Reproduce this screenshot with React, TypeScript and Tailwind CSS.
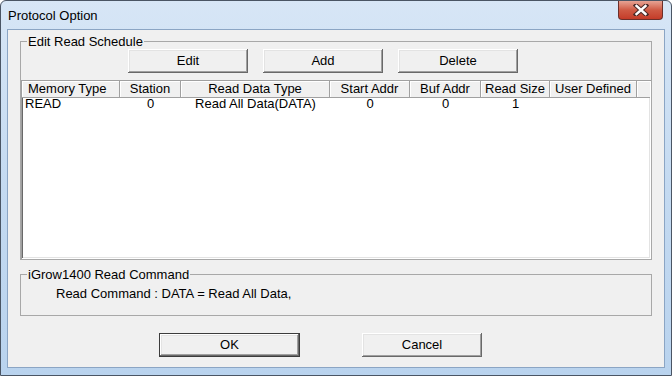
import React from 'react'

const COLS = [
  { label: 'Memory Type', align: 'text-left pl-[6px]' },
  { label: 'Station', align: 'text-center' },
  { label: 'Read Data Type', align: 'text-center' },
  { label: 'Start Addr', align: 'text-center' },
  { label: 'Buf Addr', align: 'text-center' },
  { label: 'Read Size', align: 'text-center' },
  { label: 'User Defined', align: 'text-center' },
]

const ROWS = [
  ['READ', '0', 'Read All Data(DATA)', '0', '0', '1', ''],
]

function WinButton({ label, isDefault }: { label: string; isDefault?: boolean }) {
  return (
    <button
      className={
        'h-[24px] bg-[#f0f0f0] text-[13px] text-black ' +
        (isDefault
          ? 'w-[141px] border border-[#3c3c3c] shadow-[inset_-1px_-1px_#696969,inset_1px_1px_#ffffff,inset_-2px_-2px_#a0a0a0,inset_2px_2px_#e3e3e3]'
          : 'w-[120px] shadow-[inset_-1px_-1px_#696969,inset_1px_1px_#ffffff,inset_-2px_-2px_#a0a0a0,inset_2px_2px_#e3e3e3]')
      }
    >
      {label}
    </button>
  )
}

export default function App() {
  return (
    <div
      className="w-[672px] h-[376px] bg-white"
      style={{ fontFamily: '"Liberation Sans", Arial, sans-serif' }}
    >
      <div className="w-[672px] h-[376px] rounded-t-[6px] border border-[#4a5564] bg-gradient-to-b from-[#d7e6f6] via-[#c4daf1] to-[#b9d3ee] flex flex-col">
        {/* title bar */}
        <div className="h-[28px] flex items-start justify-between">
          <span className="pl-[7px] pt-[5px] text-[13px] text-black">Protocol Option</span>
          <div className="mr-[8px] w-[45px] h-[19px] rounded-b-[4px] border border-t-0 border-[#6b2f2a] bg-gradient-to-b from-[#e6a394] via-[#cf5a44] to-[#c43b28] flex items-center justify-center">
            <svg width="16" height="12" viewBox="0 0 16 12">
              <path d="M3 1.5 L13 10.5 M13 1.5 L3 10.5" stroke="#4a2a28" strokeWidth="4.5" strokeLinecap="square" />
              <path d="M3.5 2 L12.5 10 M12.5 2 L3.5 10" stroke="#ffffff" strokeWidth="2.4" strokeLinecap="square" />
            </svg>
          </div>
        </div>

        {/* client area */}
        <div className="mx-[6px] mb-[7px] flex-1 border border-[#8ba5c4] bg-[#f0f0f0] text-[13px] text-black flex flex-col px-[12px]">
          <fieldset className="mt-[4px] border border-[#a8a8a8] p-0 mx-0 min-w-0">
            <legend className="ml-[6px] px-[1px] leading-[15px]">Edit Read Schedule</legend>
            <div className="flex gap-[15px] pl-[107px]">
              <WinButton label="Edit" />
              <WinButton label="Add" />
              <WinButton label="Delete" />
            </div>
            <div className="mt-[7px] h-[179px] bg-white shadow-[inset_1px_1px_#a0a0a0,inset_-1px_-1px_#ffffff,inset_2px_2px_#696969,inset_-2px_-2px_#e3e3e3] p-[1px]">
              <div className="grid grid-cols-[98px_61px_149px_80px_71px_69px_87px_1fr] h-[17px] bg-[#f0f0f0]">
                {COLS.map((c) => (
                  <div
                    key={c.label}
                    className={'h-[17px] leading-[16px] border-r border-[#a0a0a0] shadow-[inset_0_-1px_#a0a0a0,inset_1px_1px_#ffffff] ' + c.align}
                  >
                    {c.label}
                  </div>
                ))}
                <div className="h-[17px] shadow-[inset_0_-1px_#a0a0a0,inset_1px_1px_#ffffff]" />
              </div>
              {ROWS.map((r, i) => (
                <div key={i} className="grid grid-cols-[98px_61px_149px_80px_71px_69px_87px_1fr] h-[14px] leading-[12px]">
                  {r.map((v, j) => (
                    <div key={j} className={j === 0 ? 'pl-[3px]' : 'text-center'}>
                      {v}
                    </div>
                  ))}
                </div>
              ))}
            </div>
          </fieldset>

          <fieldset className="mt-[7px] border border-[#a8a8a8] p-0 mx-0 min-w-0 h-[49px]">
            <legend className="ml-[6px] px-[1px] leading-[15px]">iGrow1400 Read Command</legend>
            <div className="pl-[35px] pt-[2px]">Read Command : DATA = Read All Data,</div>
          </fieldset>

          <div className="flex gap-[62px] pl-[139px] mt-[17px]">
            <WinButton label="OK" isDefault />
            <WinButton label="Cancel" />
          </div>
        </div>
      </div>
    </div>
  )
}
